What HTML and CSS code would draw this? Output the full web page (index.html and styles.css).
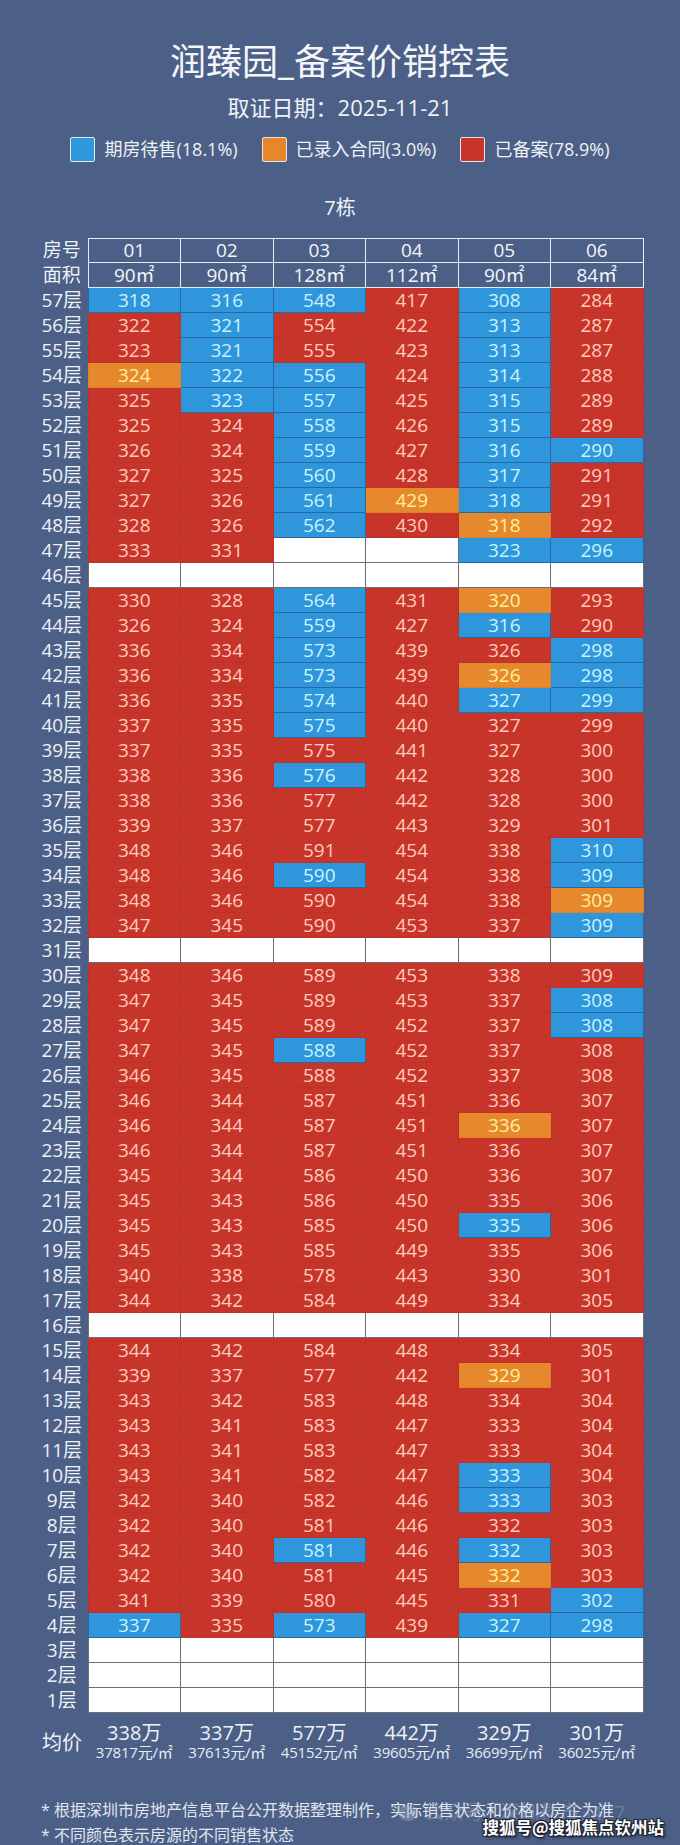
FILE: index.html
```html
<!DOCTYPE html>
<html lang="zh-CN">
<head>
<meta charset="utf-8">
<title>润臻园_备案价销控表</title>
<link rel="stylesheet" href="styles.css">
</head>
<body>
<div class="page">
  <h1 class="title">润臻园_备案价销控表</h1>
  <div class="subtitle">取证日期：2025-11-21</div>
  <div class="legend">
    <div class="legend-item"><span class="swatch sw-blue"></span>期房待售(18.1%)</div>
    <div class="legend-item"><span class="swatch sw-orange"></span>已录入合同(3.0%)</div>
    <div class="legend-item"><span class="swatch sw-red"></span>已备案(78.9%)</div>
  </div>
  <div class="building">7栋</div>

  <table class="sales">
    <colgroup>
      <col class="c-label"><col class="c-unit"><col class="c-unit"><col class="c-unit"><col class="c-unit"><col class="c-unit"><col class="c-unit">
    </colgroup>
    <thead>
      <tr class="hd hd-top"><th class="lbl">房号</th><th>01</th><th>02</th><th>03</th><th>04</th><th>05</th><th>06</th></tr>
      <tr class="hd"><th class="lbl">面积</th><th>90㎡</th><th>90㎡</th><th>128㎡</th><th>112㎡</th><th>90㎡</th><th>84㎡</th></tr>
    </thead>
    <tbody>
      <tr><th class="lbl">57层</th><td class="b">318</td><td class="b">316</td><td class="b">548</td><td class="r">417</td><td class="b">308</td><td class="r">284</td></tr>
      <tr><th class="lbl">56层</th><td class="r">322</td><td class="b">321</td><td class="r">554</td><td class="r">422</td><td class="b">313</td><td class="r">287</td></tr>
      <tr><th class="lbl">55层</th><td class="r">323</td><td class="b">321</td><td class="r">555</td><td class="r">423</td><td class="b">313</td><td class="r">287</td></tr>
      <tr><th class="lbl">54层</th><td class="o">324</td><td class="b">322</td><td class="b">556</td><td class="r">424</td><td class="b">314</td><td class="r">288</td></tr>
      <tr><th class="lbl">53层</th><td class="r">325</td><td class="b">323</td><td class="b">557</td><td class="r">425</td><td class="b">315</td><td class="r">289</td></tr>
      <tr><th class="lbl">52层</th><td class="r">325</td><td class="r">324</td><td class="b">558</td><td class="r">426</td><td class="b">315</td><td class="r">289</td></tr>
      <tr><th class="lbl">51层</th><td class="r">326</td><td class="r">324</td><td class="b">559</td><td class="r">427</td><td class="b">316</td><td class="b">290</td></tr>
      <tr><th class="lbl">50层</th><td class="r">327</td><td class="r">325</td><td class="b">560</td><td class="r">428</td><td class="b">317</td><td class="r">291</td></tr>
      <tr><th class="lbl">49层</th><td class="r">327</td><td class="r">326</td><td class="b">561</td><td class="o">429</td><td class="b">318</td><td class="r">291</td></tr>
      <tr><th class="lbl">48层</th><td class="r">328</td><td class="r">326</td><td class="b">562</td><td class="r">430</td><td class="o">318</td><td class="r">292</td></tr>
      <tr><th class="lbl">47层</th><td class="r">333</td><td class="r">331</td><td class="w"></td><td class="w"></td><td class="b">323</td><td class="b">296</td></tr>
      <tr><th class="lbl">46层</th><td class="w"></td><td class="w"></td><td class="w"></td><td class="w"></td><td class="w"></td><td class="w"></td></tr>
      <tr><th class="lbl">45层</th><td class="r">330</td><td class="r">328</td><td class="b">564</td><td class="r">431</td><td class="o">320</td><td class="r">293</td></tr>
      <tr><th class="lbl">44层</th><td class="r">326</td><td class="r">324</td><td class="b">559</td><td class="r">427</td><td class="b">316</td><td class="r">290</td></tr>
      <tr><th class="lbl">43层</th><td class="r">336</td><td class="r">334</td><td class="b">573</td><td class="r">439</td><td class="r">326</td><td class="b">298</td></tr>
      <tr><th class="lbl">42层</th><td class="r">336</td><td class="r">334</td><td class="b">573</td><td class="r">439</td><td class="o">326</td><td class="b">298</td></tr>
      <tr><th class="lbl">41层</th><td class="r">336</td><td class="r">335</td><td class="b">574</td><td class="r">440</td><td class="b">327</td><td class="b">299</td></tr>
      <tr><th class="lbl">40层</th><td class="r">337</td><td class="r">335</td><td class="b">575</td><td class="r">440</td><td class="r">327</td><td class="r">299</td></tr>
      <tr><th class="lbl">39层</th><td class="r">337</td><td class="r">335</td><td class="r">575</td><td class="r">441</td><td class="r">327</td><td class="r">300</td></tr>
      <tr><th class="lbl">38层</th><td class="r">338</td><td class="r">336</td><td class="b">576</td><td class="r">442</td><td class="r">328</td><td class="r">300</td></tr>
      <tr><th class="lbl">37层</th><td class="r">338</td><td class="r">336</td><td class="r">577</td><td class="r">442</td><td class="r">328</td><td class="r">300</td></tr>
      <tr><th class="lbl">36层</th><td class="r">339</td><td class="r">337</td><td class="r">577</td><td class="r">443</td><td class="r">329</td><td class="r">301</td></tr>
      <tr><th class="lbl">35层</th><td class="r">348</td><td class="r">346</td><td class="r">591</td><td class="r">454</td><td class="r">338</td><td class="b">310</td></tr>
      <tr><th class="lbl">34层</th><td class="r">348</td><td class="r">346</td><td class="b">590</td><td class="r">454</td><td class="r">338</td><td class="b">309</td></tr>
      <tr><th class="lbl">33层</th><td class="r">348</td><td class="r">346</td><td class="r">590</td><td class="r">454</td><td class="r">338</td><td class="o">309</td></tr>
      <tr><th class="lbl">32层</th><td class="r">347</td><td class="r">345</td><td class="r">590</td><td class="r">453</td><td class="r">337</td><td class="b">309</td></tr>
      <tr><th class="lbl">31层</th><td class="w"></td><td class="w"></td><td class="w"></td><td class="w"></td><td class="w"></td><td class="w"></td></tr>
      <tr><th class="lbl">30层</th><td class="r">348</td><td class="r">346</td><td class="r">589</td><td class="r">453</td><td class="r">338</td><td class="r">309</td></tr>
      <tr><th class="lbl">29层</th><td class="r">347</td><td class="r">345</td><td class="r">589</td><td class="r">453</td><td class="r">337</td><td class="b">308</td></tr>
      <tr><th class="lbl">28层</th><td class="r">347</td><td class="r">345</td><td class="r">589</td><td class="r">452</td><td class="r">337</td><td class="b">308</td></tr>
      <tr><th class="lbl">27层</th><td class="r">347</td><td class="r">345</td><td class="b">588</td><td class="r">452</td><td class="r">337</td><td class="r">308</td></tr>
      <tr><th class="lbl">26层</th><td class="r">346</td><td class="r">345</td><td class="r">588</td><td class="r">452</td><td class="r">337</td><td class="r">308</td></tr>
      <tr><th class="lbl">25层</th><td class="r">346</td><td class="r">344</td><td class="r">587</td><td class="r">451</td><td class="r">336</td><td class="r">307</td></tr>
      <tr><th class="lbl">24层</th><td class="r">346</td><td class="r">344</td><td class="r">587</td><td class="r">451</td><td class="o">336</td><td class="r">307</td></tr>
      <tr><th class="lbl">23层</th><td class="r">346</td><td class="r">344</td><td class="r">587</td><td class="r">451</td><td class="r">336</td><td class="r">307</td></tr>
      <tr><th class="lbl">22层</th><td class="r">345</td><td class="r">344</td><td class="r">586</td><td class="r">450</td><td class="r">336</td><td class="r">307</td></tr>
      <tr><th class="lbl">21层</th><td class="r">345</td><td class="r">343</td><td class="r">586</td><td class="r">450</td><td class="r">335</td><td class="r">306</td></tr>
      <tr><th class="lbl">20层</th><td class="r">345</td><td class="r">343</td><td class="r">585</td><td class="r">450</td><td class="b">335</td><td class="r">306</td></tr>
      <tr><th class="lbl">19层</th><td class="r">345</td><td class="r">343</td><td class="r">585</td><td class="r">449</td><td class="r">335</td><td class="r">306</td></tr>
      <tr><th class="lbl">18层</th><td class="r">340</td><td class="r">338</td><td class="r">578</td><td class="r">443</td><td class="r">330</td><td class="r">301</td></tr>
      <tr><th class="lbl">17层</th><td class="r">344</td><td class="r">342</td><td class="r">584</td><td class="r">449</td><td class="r">334</td><td class="r">305</td></tr>
      <tr><th class="lbl">16层</th><td class="w"></td><td class="w"></td><td class="w"></td><td class="w"></td><td class="w"></td><td class="w"></td></tr>
      <tr><th class="lbl">15层</th><td class="r">344</td><td class="r">342</td><td class="r">584</td><td class="r">448</td><td class="r">334</td><td class="r">305</td></tr>
      <tr><th class="lbl">14层</th><td class="r">339</td><td class="r">337</td><td class="r">577</td><td class="r">442</td><td class="o">329</td><td class="r">301</td></tr>
      <tr><th class="lbl">13层</th><td class="r">343</td><td class="r">342</td><td class="r">583</td><td class="r">448</td><td class="r">334</td><td class="r">304</td></tr>
      <tr><th class="lbl">12层</th><td class="r">343</td><td class="r">341</td><td class="r">583</td><td class="r">447</td><td class="r">333</td><td class="r">304</td></tr>
      <tr><th class="lbl">11层</th><td class="r">343</td><td class="r">341</td><td class="r">583</td><td class="r">447</td><td class="r">333</td><td class="r">304</td></tr>
      <tr><th class="lbl">10层</th><td class="r">343</td><td class="r">341</td><td class="r">582</td><td class="r">447</td><td class="b">333</td><td class="r">304</td></tr>
      <tr><th class="lbl">9层</th><td class="r">342</td><td class="r">340</td><td class="r">582</td><td class="r">446</td><td class="b">333</td><td class="r">303</td></tr>
      <tr><th class="lbl">8层</th><td class="r">342</td><td class="r">340</td><td class="r">581</td><td class="r">446</td><td class="r">332</td><td class="r">303</td></tr>
      <tr><th class="lbl">7层</th><td class="r">342</td><td class="r">340</td><td class="b">581</td><td class="r">446</td><td class="b">332</td><td class="r">303</td></tr>
      <tr><th class="lbl">6层</th><td class="r">342</td><td class="r">340</td><td class="r">581</td><td class="r">445</td><td class="o">332</td><td class="r">303</td></tr>
      <tr><th class="lbl">5层</th><td class="r">341</td><td class="r">339</td><td class="r">580</td><td class="r">445</td><td class="r">331</td><td class="b">302</td></tr>
      <tr><th class="lbl">4层</th><td class="b">337</td><td class="r">335</td><td class="b">573</td><td class="r">439</td><td class="b">327</td><td class="b">298</td></tr>
      <tr><th class="lbl">3层</th><td class="w"></td><td class="w"></td><td class="w"></td><td class="w"></td><td class="w"></td><td class="w"></td></tr>
      <tr><th class="lbl">2层</th><td class="w"></td><td class="w"></td><td class="w"></td><td class="w"></td><td class="w"></td><td class="w"></td></tr>
      <tr><th class="lbl">1层</th><td class="w"></td><td class="w"></td><td class="w"></td><td class="w"></td><td class="w"></td><td class="w"></td></tr>
    </tbody>
    <tfoot>
      <tr class="avg">
        <th class="lbl">均价</th>
        <td><div class="total">338万</div><div class="unit">37817元/㎡</div></td>
        <td><div class="total">337万</div><div class="unit">37613元/㎡</div></td>
        <td><div class="total">577万</div><div class="unit">45152元/㎡</div></td>
        <td><div class="total">442万</div><div class="unit">39605元/㎡</div></td>
        <td><div class="total">329万</div><div class="unit">36699元/㎡</div></td>
        <td><div class="total">301万</div><div class="unit">36025元/㎡</div></td>
      </tr>
    </tfoot>
  </table>

  <div class="notes">
    <p>* 根据深圳市房地产信息平台公开数据整理制作，实际销售状态和价格以房企为准</p>
    <p>* 不同颜色表示房源的不同销售状态</p>
  </div>

  <div class="wm-faint"><span class="wm-icon"></span>公众号 · 深圳楼市3477</div>
  <div class="wm">搜狐号@搜狐焦点钦州站</div>
</div>
</body>
</html>
```

FILE: styles.css
```css
* { box-sizing: border-box; }

html, body {
  margin: 0;
  padding: 0;
}

body {
  background: #4c5f86;
  font-family: "Open Sans", "Noto Sans CJK SC", sans-serif;
  color: #f2f5f9;
}

.page {
  position: relative;
  width: 680px;
  height: 1845px;
  overflow: hidden;
}

.title {
  margin: 0;
  padding-top: 40px;
  height: 84px;
  line-height: 44px;
  font-size: 36px;
  font-weight: 400;
  text-align: center;
  color: #f4f6fa;
}

.subtitle {
  margin-top: 8px;
  height: 30px;
  line-height: 30px;
  font-size: 22px;
  text-align: center;
  color: #eef2f7;
}

.legend {
  display: flex;
  justify-content: center;
  gap: 24px;
  margin-top: 15px;
  height: 25px;
}

.legend-item {
  display: flex;
  align-items: center;
  gap: 9px;
  font-size: 18px;
  line-height: 25px;
  color: #eef2f7;
}

.swatch {
  width: 25px;
  height: 25px;
  border: 1px solid #dfe7f0;
  border-radius: 2px;
}

.sw-blue { background: #2f97dc; }
.sw-orange { background: #e8872a; }
.sw-red { background: #c8352a; }

.building {
  margin-top: 32px;
  height: 28px;
  line-height: 28px;
  font-size: 20px;
  text-align: center;
  color: #eef2f7;
}

.sales {
  margin: 16px 0 0 36px;
  width: 607px;
  border-collapse: collapse;
  table-layout: fixed;
}

.c-label { width: 52px; }
.c-unit { width: 92.5px; }

.sales th,
.sales td {
  padding: 0;
  text-align: center;
  font-weight: 400;
  font-size: 19px;
  line-height: 23px;
  height: 25px;
}

.sales .hd-top th { height: 24px; }

.sales thead th {
  border: 1px solid #e6edf6;
  color: #f2f5f9;
}

.sales th.lbl {
  border: none;
  color: #eef2f7;
  font-size: 19px;
  white-space: nowrap;
}

.sales td.b {
  background: #2f96db;
  color: #c8f4ff;
  border: 1px solid #2469a3;
}

.sales td.r {
  background: #c7352a;
  color: #ffcbbd;
  border: 1px solid #bd3127;
}

.sales td.o {
  background: #e6892c;
  color: #fff09c;
  border: 1px solid #df8127;
}

.sales td.w {
  background: #ffffff;
  border: 1px solid #6b6f78;
}

.sales .avg td,
.sales .avg th {
  height: 58px;
  border: none;
  vertical-align: middle;
}

.sales .avg th.lbl {
  font-size: 20px;
  padding-top: 2px;
}

.total {
  font-size: 20px;
  line-height: 22px;
  color: #eef2f7;
}

.unit {
  font-size: 15px;
  line-height: 17px;
  color: #e6ecf4;
  white-space: nowrap;
  letter-spacing: -0.2px;
}

.notes {
  margin: 27px 0 0 41px;
  font-size: 16px;
  line-height: 25px;
  color: #e0e6ef;
}

.notes p {
  margin: 0;
}

.wm-faint {
  position: absolute;
  left: 398px;
  top: 1800px;
  font-size: 20px;
  line-height: 26px;
  color: rgba(190, 200, 218, 0.3);
  display: flex;
  align-items: center;
  gap: 6px;
}

.wm-icon {
  width: 20px;
  height: 16px;
  border-radius: 50%;
  background: rgba(190, 200, 218, 0.3);
}

.wm {
  position: absolute;
  right: 16px;
  top: 1815px;
  font-size: 16.5px;
  line-height: 24px;
  font-weight: 700;
  font-family: "Noto Sans CJK SC", sans-serif;
  color: #ffffff;
  text-shadow: 1px 1px 0 #1d2230, -1px -1px 0 #1d2230, 1px -1px 0 #1d2230, -1px 1px 0 #1d2230, 2px 2px 3px rgba(0, 0, 0, 0.6);
}
```
